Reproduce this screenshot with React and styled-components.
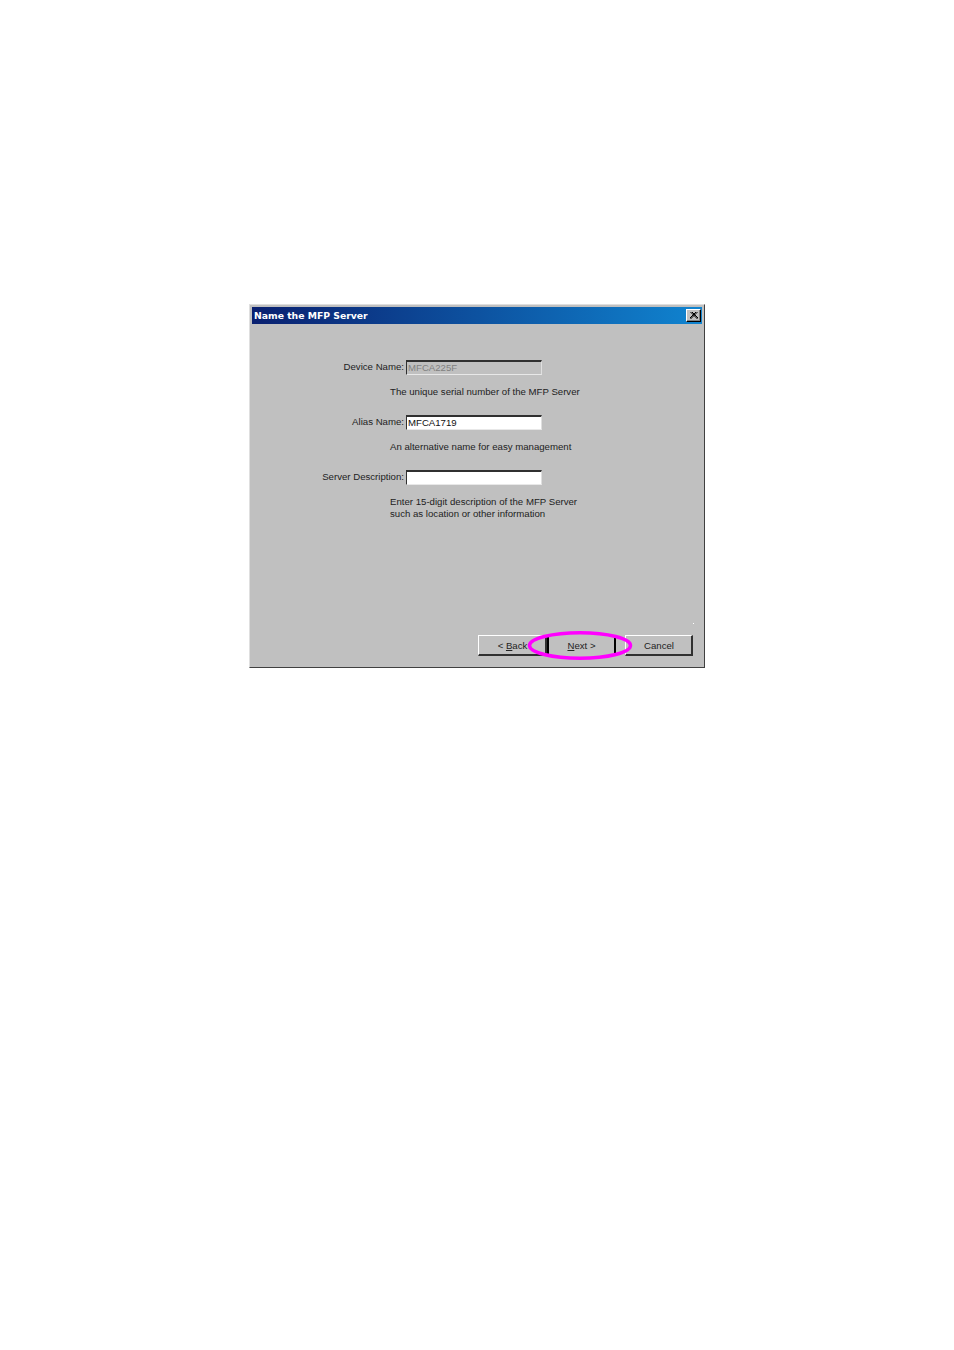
import React from "react";
import styled, { createGlobalStyle } from "styled-components";

const Global = createGlobalStyle`
  html, body { margin: 0; padding: 0; background: #fff; }
  body { font-family: "Liberation Sans", Arial, sans-serif; }
`;

const Page = styled.div`
  width: 954px;
  height: 1350px;
  padding: 304px 0 0 249px;
  box-sizing: border-box;
`;

const Dialog = styled.div`
  position: relative;
  width: 456px;
  height: 364px;
  box-sizing: border-box;
  display: flex;
  flex-direction: column;
  background: #c0c0c0;
  padding: 2px;
  border-style: solid;
  border-width: 1px;
  border-color: #dfdfdf #404040 #404040 #dfdfdf;
  color: #111;
  font-size: 9.65px;
`;

const TitleBar = styled.div`
  height: 17px;
  flex: none;
  display: flex;
  align-items: center;
  justify-content: space-between;
  padding: 0 1px 0 2px;
  background: linear-gradient(90deg, #0a2070 0%, #1084d0 100%);
`;

const TitleText = styled.span`
  color: #fff;
  font: bold 9.27px "DejaVu Sans", sans-serif;
  white-space: nowrap;
`;

const CloseButton = styled.div`
  width: 15px;
  height: 13px;
  box-sizing: border-box;
  display: flex;
  align-items: center;
  justify-content: center;
  background: #c0c0c0;
  border-style: solid;
  border-width: 1px;
  border-color: #fff #000 #000 #fff;
  box-shadow: inset -1px -1px 0 #808080;
`;

const Form = styled.div`
  padding-top: 36px;
  display: flex;
  flex-direction: column;
`;

const Row = styled.div`
  display: flex;
  align-items: center;
  height: 15px;
`;

const Label = styled.label`
  width: 152px;
  flex: none;
  padding-bottom: 2px;
  text-align: right;
  white-space: nowrap;
  color: #222;
`;

const Field = styled.div`
  width: 136px;
  height: 15px;
  margin-left: 2px;
  box-sizing: border-box;
  padding: 0 1px 2px 1px;
  display: flex;
  align-items: center;
  border-style: solid;
  border-width: 2px 1px 1px 1px;
  border-color: #303030 #dfdfdf #e8e8e8 #303030;
  background: ${(p) => (p.$disabled ? "#c0c0c0" : "#fff")};
  color: ${(p) => (p.$disabled ? "#808080" : "#111")};
`;

const Hint = styled.div`
  margin: ${(p) => (p.$last ? "11px 0 0" : "11px 0 17px")} 138px;
  line-height: 12px;
  white-space: nowrap;
  color: #222;
`;

const Footer = styled.div`
  margin-top: auto;
  padding: 0 9px 9px 226px;
  display: flex;
  position: relative;
`;

const Button = styled.div`
  width: ${(p) => p.$w}px;
  height: 21px;
  margin-left: ${(p) => p.$gap || 0}px;
  box-sizing: border-box;
  display: flex;
  align-items: center;
  justify-content: center;
  background: #c0c0c0;
  border-style: solid;
  border-width: ${(p) => (p.$default ? "0 2px" : "1px 2px 2px 1px")};
  border-color: ${(p) => (p.$default ? "#000" : "#fff #303030 #303030 #fff")};
  padding-left: ${(p) => (p.$default ? 0 : 1)}px;
  white-space: nowrap;
  color: #222;
`;

const Mnemonic = styled.span`
  text-decoration: underline;
`;

const Dot = styled.span`
  position: absolute;
  right: 8px;
  bottom: 41px;
  width: 1px;
  height: 1px;
  background: #fff;
`;

const Highlight = styled.svg`
  position: absolute;
  left: 278px;
  top: 326px;
  width: 106px;
  height: 30px;
  overflow: visible;
`;

export default function App() {
  return (
    <Page>
      <Global />
      <Dialog>
        <TitleBar>
          <TitleText>Name the MFP Server</TitleText>
          <CloseButton>
            <svg width="8" height="7" viewBox="0 0 8 7">
              <path d="M0.5 0 L7.5 7 M2 0 L9 7 M7.5 0 L0.5 7 M6 0 L-1 7" stroke="#000" strokeWidth="1" fill="none" />
            </svg>
          </CloseButton>
        </TitleBar>
        <Form>
          <Row>
            <Label>Device Name:</Label>
            <Field $disabled>MFCA225F</Field>
          </Row>
          <Hint>The unique serial number of the MFP Server</Hint>
          <Row>
            <Label>Alias Name:</Label>
            <Field>MFCA1719</Field>
          </Row>
          <Hint>An alternative name for easy management</Hint>
          <Row>
            <Label>Server Description:</Label>
            <Field />
          </Row>
          <Hint $last>
            Enter 15-digit description of the MFP Server
            <br />
            such as location or other information
          </Hint>
        </Form>
        <Footer>
          <Dot />
          <Button $w={69}>
            &lt;&nbsp;<Mnemonic>B</Mnemonic>ack
          </Button>
          <Button $w={69} $default>
            <Mnemonic>N</Mnemonic>ext &gt;
          </Button>
          <Button $w={68} $gap={9}>
            Cancel
          </Button>
        </Footer>
        <Highlight viewBox="0 0 106 30">
          <ellipse cx="52" cy="14.5" rx="50.5" ry="12.75" fill="none" stroke="#ff00ff" strokeWidth="3.5" />
        </Highlight>
      </Dialog>
    </Page>
  );
}
